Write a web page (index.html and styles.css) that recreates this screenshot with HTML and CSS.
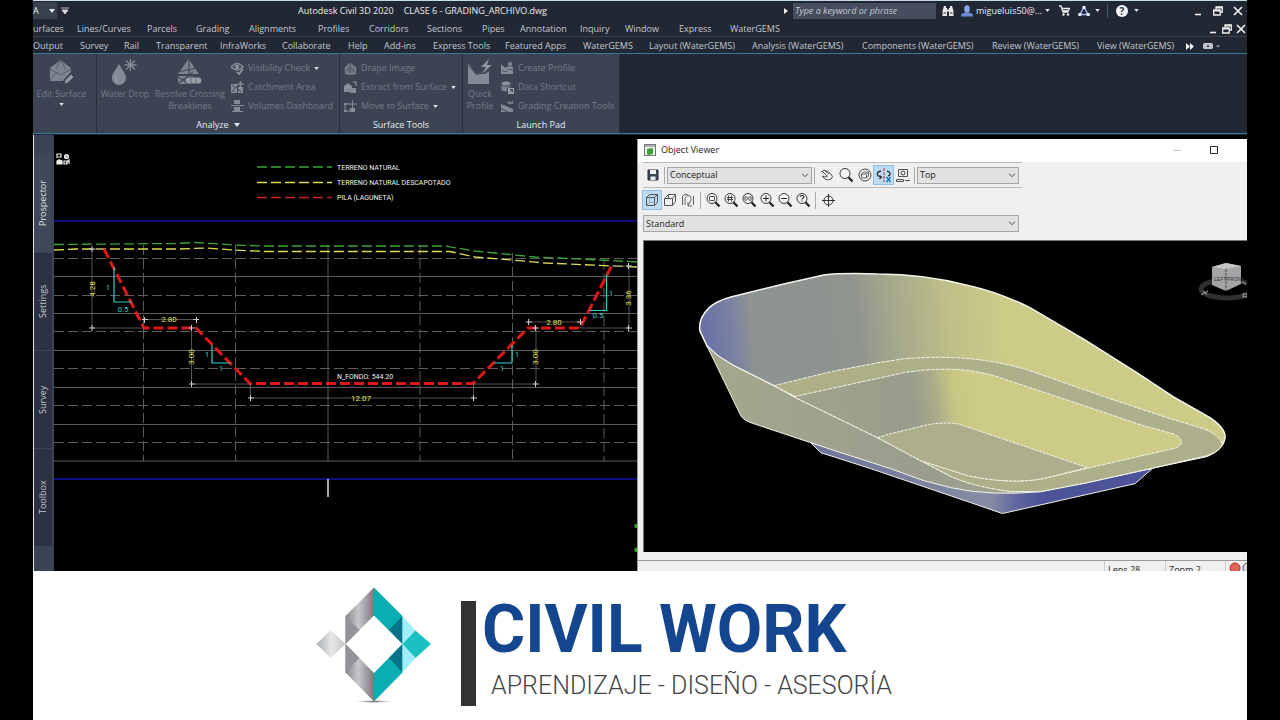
FILE: index.html
```html
<!DOCTYPE html>
<html lang="es">
<head>
<meta charset="utf-8">
<title>Autodesk Civil 3D 2020 - Civil Work</title>
<link rel="stylesheet" href="styles.css">
</head>
<body>
<svg class="defs" aria-hidden="true">
  <symbol id="caret" viewBox="0 0 6 4"><path d="M0 0h6L3 4z" fill="currentColor"/></symbol>
  <symbol id="restore" viewBox="0 0 10 10"><path d="M3 3V1h6.300v5H7.500M.7 4h6.500v5H.7zM.7 4.800h6.500M3 1.800h6" fill="none" stroke="currentColor" stroke-width="1.300"/></symbol>
  <symbol id="close" viewBox="0 0 10 10"><path d="M1 1l8 8M9 1L1 9" stroke="currentColor" stroke-width="1.700"/></symbol>
  <symbol id="min" viewBox="0 0 10 10"><path d="M2 8.500h6" stroke="currentColor" stroke-width="1.600"/></symbol>
  <symbol id="chev" viewBox="0 0 8 5"><path d="M1 .7l3 3 3-3" fill="none" stroke="#444"/></symbol>
  <symbol id="lens" viewBox="0 0 16 16"><circle cx="7" cy="6.500" r="5" fill="#f7f7f7" stroke="#333"/><path d="M10.500 10.200l4 4.300" stroke="#222" stroke-width="2.200"/></symbol>
</svg>
<div class="app">
  <header class="titlebar">
    <div class="quick"><button class="quick-a" aria-label="Workspace">A <svg class="car"><use href="#caret"/></svg></button>
      <button aria-label="Customize"><svg width="8" height="7"><path d="M0 1h8M1 3h6L4 7z" stroke="#ddd" fill="#ddd" stroke-width=".8"/></svg></button></div>
    <h1 class="doc"><span>Autodesk Civil 3D 2020</span><span>CLASE 6 - GRADING_ARCHIVO.dwg</span></h1>
    <div class="account">
      <svg class="play" width="5" height="8"><path d="M0 1l4 3-4 3z" fill="#eee"/></svg>
      <input class="search" type="text" aria-label="Search" placeholder="Type a keyword or phrase">
      <button aria-label="Find"><svg width="12" height="12"><path d="M2 1h2v2h1v8H.5V6zM8 1h2l1.500 5v5H7V3h1zM4.500 4.500h3v2h-3z" fill="#e8e8e8"/><path d="M1.500 8h2.500M8 8h2.500" stroke="#222833"/></svg></button>
      <button class="user"><svg width="12" height="12"><ellipse cx="6" cy="4" rx="2.800" ry="3.700" fill="#86a5e8"/><path d="M0 11.500c0-3 2-3.500 4-4h4c2 .5 4 1 4 4z" fill="#6a8cd8"/></svg><span>migueluis50@...</span><svg class="car sm"><use href="#caret"/></svg></button>
      <button class="cart" aria-label="Store"><svg width="11" height="11"><path d="M0 1h2l2 6h5.500M3 3.500h7.500L9 6H4" fill="none" stroke="#eee" stroke-width="1.300"/><circle cx="4.500" cy="9.500" r="1.200" fill="#eee"/><circle cx="9" cy="9.500" r="1.200" fill="#eee"/></svg></button>
      <button class="tri" aria-label="Apps"><svg width="12" height="12"><path d="M6 2L2 9.500h8z" fill="none" stroke="#9fb8f0" stroke-width="1.500"/><path d="M4.500 1h3v3h-3zM.3 8h3v3h-3zM8.700 8h3v3h-3z" fill="#e6ecff"/></svg><svg class="car sm"><use href="#caret"/></svg></button>
      <span class="rule"></span>
      <button class="help" aria-label="Help"><svg width="12" height="12"><circle cx="6" cy="6" r="6" fill="#f4f6fa"/><text x="6" y="9.500" text-anchor="middle" class="q">?</text></svg><svg class="car sm"><use href="#caret"/></svg></button>
      <span class="wins"><button aria-label="Minimize"><svg><use href="#min"/></svg></button><button aria-label="Restore"><svg><use href="#restore"/></svg></button><button aria-label="Close"><svg><use href="#close"/></svg></button></span>
    </div>
  </header>

  <nav class="menubar" aria-label="Menu">
    <button>urfaces</button><button>Lines/Curves</button><button>Parcels</button><button>Grading</button><button>Alignments</button><button>Profiles</button><button>Corridors</button><button>Sections</button><button>Pipes</button><button>Annotation</button><button>Inquiry</button><button>Window</button><button>Express</button><button>WaterGEMS</button>
    <span class="wins tight"><button aria-label="Minimize drawing"><svg><use href="#min"/></svg></button><button aria-label="Restore drawing"><svg><use href="#restore"/></svg></button><button aria-label="Close drawing"><svg><use href="#close"/></svg></button></span>
  </nav>

  <nav class="tabs" aria-label="Ribbon tabs">
    <button>Output</button><button>Survey</button><button>Rail</button><button>Transparent</button><button>InfraWorks</button><button>Collaborate</button><button>Help</button><button>Add-ins</button><button>Express Tools</button><button>Featured Apps</button><button>WaterGEMS</button><button>Layout (WaterGEMS)</button><button>Analysis (WaterGEMS)</button><button>Components (WaterGEMS)</button><button>Review (WaterGEMS)</button><button>View (WaterGEMS)</button>
    <button aria-label="More tabs"><svg width="8" height="7"><path d="M0 0l4 3.500L0 7zM4 0l4 3.500L4 7z" fill="#eee"/></svg></button>
    <button aria-label="Ribbon display"><svg width="18" height="7"><rect width="10" height="6" rx="1.500" fill="#c0c4cb"/><path d="M3.500 4L5 2l1.500 2z" fill="#222833"/><path d="M13 2.500h4l-2 2z" fill="#aaa"/></svg></button>
  </nav>

  <section class="ribbon">
    <div class="panel edit">
      <div class="tools"><button class="big"><svg width="26" height="26"><path d="M1 9L11.500 1 22 9v4l-5 5-3 4H1z" fill="#7d838f"/><path d="M1 10l10.500 6L22 10M1 21l7-8M11.500 1L7 10M11.500 1l5 9" stroke="#555d6c" fill="none"/><path d="M15 25l1-4 6-6 3 3-6 6z" fill="#9096a0" stroke="#3c4454"/></svg><span>Edit Surface</span><svg class="car sm"><use href="#caret"/></svg></button></div>
      <div class="ptitle"></div>
    </div>
    <div class="panel analyze">
      <div class="tools">
        <button class="big drop"><svg width="26" height="26"><path d="M7 5c3 6 7 9 7 14a7 7 0 0 1-14 0c0-5 4-8 7-14z" fill="#858b96"/><path d="M4 17c-1 4 1 6 3 7" stroke="#a3a8b1" fill="none"/><path d="M18.500 0v12M12.500 6h12M14 1.500l9 9M23 1.500l-9 9" stroke="#858b96" stroke-width="1.300"/></svg><span>Water Drop</span></button>
        <button class="big resolve"><svg width="26" height="26"><path d="M11.500 0L22 15H1zM1 17h15v8H1z" fill="#7d838f"/><path d="M12 0v15M0 13l20-4M1 18l10 6M1 25l15-12" stroke="#414958" stroke-width="1.200" fill="none"/><rect x="8" y="18" width="17" height="7" rx="3.500" fill="#9a9fa8" stroke="#3c4454"/><path d="M14 18v7M19 18v7" stroke="#6b717d"/></svg><span>Resolve Crossing<br>Breaklines</span></button>
        <div class="list">
          <button><svg width="13" height="13"><path d="M0 5q6-7 12 0-6 6-12 0z" fill="none" stroke="#858b96" stroke-width="1.500"/><circle cx="6" cy="5" r="2.400" fill="#858b96"/><path d="M6 10l2 2 4-5" fill="none" stroke="#9a9fa8" stroke-width="1.500"/></svg>Visibility Check<svg class="car sm"><use href="#caret"/></svg></button>
          <button><svg width="13" height="13"><path d="M0 3h6v9H0zM7 6h5v6H7z" fill="#858b96"/><path d="M1 11l4-5 5 5M1 4l4 3" stroke="#3c4454" fill="none"/><path d="M9.500 0v6M6.500 3h6" stroke="#858b96" stroke-width="1.500"/></svg>Catchment Area</button>
          <button><svg width="13" height="13"><path d="M3 0h6v4H3zM3 7h6v5H3z" fill="#858b96"/><path d="M0 5.500h13M1 11.500h11" stroke="#858b96"/></svg>Volumes Dashboard</button>
        </div>
      </div>
      <div class="ptitle">Analyze <svg class="car"><use href="#caret"/></svg></div>
    </div>
    <div class="panel surface">
      <div class="tools">
        <div class="list">
          <button><svg width="13" height="13"><path d="M1 6l5-5 6 5-1 6H2z" fill="#6f7682" stroke="#858b96"/><path d="M2 9l4-4 5 5M6 1v10" stroke="#4a5262" fill="none"/></svg>Drape Image</button>
          <button><svg width="13" height="13"><path d="M0 5l4-3 4 3v6H0zM6 7h6v5H6z" fill="#858b96"/><path d="M0 8l6-3M9 1h3v4" stroke="#9a9fa8" fill="none"/></svg>Extract from Surface<svg class="car sm"><use href="#caret"/></svg></button>
          <button><svg width="13" height="13"><path d="M1 4h5M1 4v7h6M8.500 0v8M5 4h8" fill="none" stroke="#858b96"/><path d="M6 8h5v4H6z" fill="#858b96"/><path d="M0 3h3v2H0zM0 10h3v2H0z" fill="#858b96"/></svg>Move to Surface<svg class="car sm"><use href="#caret"/></svg></button>
        </div>
      </div>
      <div class="ptitle">Surface Tools</div>
    </div>
    <div class="panel launch">
      <div class="tools">
        <button class="big qp"><svg width="26" height="26"><path d="M1 4v21h21V12l-4 3-5 0-4 1z" fill="#858b96"/><path d="M1 6l8 9 6-2 7-1" fill="none" stroke="#4a5262"/><path d="M22 0l-8 8h5l-4 7 10-9h-5z" fill="#9297a1"/></svg><span>Quick<br>Profile</span></button>
        <div class="list">
          <button><svg width="13" height="13"><path d="M0 2l4 4 4-2 4 1v7H0z" fill="#858b96"/><path d="M1 8l3 2 4-3 4 1" stroke="#4a5262" fill="none"/><circle cx="9" cy="2" r="2" fill="#858b96"/></svg>Create Profile</button>
          <button><svg width="13" height="13"><ellipse cx="5" cy="2.500" rx="4.500" ry="2" fill="#8d929d"/><path d="M.5 4.500q4.500 2 9 0v2H6v4q-4 0-5.500-1z" fill="#7b818d"/><path d="M7 7h6v6H7z" fill="#9ca1aa"/><path d="M8.500 11.500l3-3M9 8.500h2.500V11" stroke="#3c4454" fill="none"/></svg>Data Shortcut</button>
          <button><svg width="13" height="13"><path d="M0 4l12 5v3H8L0 8zM0 9l6 3H0z" fill="#858b96"/><path d="M6 1l4 1 2-2v4H7z" fill="#737a86"/></svg>Grading Creation Tools</button>
        </div>
      </div>
      <div class="ptitle">Launch Pad</div>
    </div>
  </section>

  <main class="work">
    <div class="side"><button class="on">Prospector</button><button>Settings</button><button>Survey</button><button>Toolbox</button></div>

    <svg class="drawing" viewBox="54 135 583 436" role="img" aria-label="Sección transversal">
      <g fill="none" stroke="#eee" stroke-width="1.200"><path d="M57 158v-4h4v3h-3M57 162l2-2"/><circle cx="66.500" cy="156.500" r="2" fill="#aaa"/><path d="M57 164v-3l2-1 3 1v3zM58 162h4" fill="#eee"/><path d="M64 161h3v3h-3zM66 163l3-3v4"/></g>
      <g stroke="#5d5d5d" fill="none">
        <path d="M54 276.500h583M54 313.500h583M54 350.500h583M54 387.500h583M54 424.500h583M54 461h583M328 245v216"/>
        <path stroke-dasharray="10 4" d="M54 258.500h583M54 295.500h583M54 331.500h583M54 368.500h583M54 405.500h583M54 442.500h583M143.500 245v216M235.500 245v216M420 245v216M512.500 253v208M604 260v201"/>
      </g>
      <path d="M54 221h583M54 479h583" stroke="#1414a8" stroke-width="1.500"/>
      <path d="M328 479v18" stroke="#ddd" stroke-width="1.500"/>
      <g fill="none" stroke-dasharray="10 4">
        <path stroke="#3ba536" stroke-width="1.300" d="M257 167h75M54 244.500L175 243.500 195 242.500 235 245 265 246H445L475 251 535 257 600 260 637 262"/>
        <path stroke="#dcdc50" stroke-width="1.300" d="M257 182.500h75M54 250L75 249H180L205 248 235 250 265 251.500H450L475 257 512 260 545 263 637 267"/>
        <path stroke="#d02020" stroke-width="1.500" d="M257 197.500h75"/>
        <path stroke="#de1818" stroke-width="3" d="M104 249L144 328H196L250 383.500H473L528 328H580L612 265"/>
      </g>
      <path stroke="#777" stroke-width=".7" fill="none" d="M92 249v79h52M92 249h12M144 319.500h52M191.500 328v56h59M250.500 384v14h223v-14M528 322h52M536 328v56h-63M580 328h49v-62h-17"/>
      <path stroke="#ccc" fill="none" d="M89 249h6M92 246v6M89 328h6M92 325v6M142 319.500h6M144.500 317v6M193 319.500h6M196.500 317v6M189 328h6M191.500 325v6M189 384h6M191.500 381v6M248 398h6M250.500 395v6M471 398h6M473.500 395v6M526 322h6M528.500 319v6M577 322h6M580.500 319v6M533 328h6M535.500 325v6M533 384h6M535.500 381v6M626 266h6M628.500 263v6M626 328h6M628.500 325v6"/>
      <path stroke="#35cccc" stroke-width="1.200" fill="none" d="M114 267v35h18M212 345v18h18M512 345v18h-18M606.500 275v35.500h-17"/>
      <g class="cad">
        <g class="note"><text x="337" y="170">TERRENO NATURAL</text><text x="337" y="185">TERRENO NATURAL DESCAPOTADO</text><text x="337" y="200">PILA (LAGUNETA)</text><text x="337" y="379">N_FONDO: 544.20</text></g>
        <g class="dim"><text x="169" y="322">2.80</text><text x="361" y="401">12.07</text><text x="554" y="325">2.80</text><text transform="translate(95 289) rotate(-90)">4.28</text><text transform="translate(194 357) rotate(-90)">3.00</text><text transform="translate(538 357) rotate(-90)">3.00</text><text transform="translate(631 298) rotate(-90)">3.36</text></g>
        <g fill="#35cccc"><text x="108" y="290">1</text><text x="123" y="312">0.5</text><text x="207" y="357">1</text><text x="221" y="371">1</text><text x="517" y="357">1</text><text x="502" y="371">1</text><text x="611" y="296">1</text><text x="598" y="318">0.5</text></g>
      </g>
      <path d="M637 523.500l-3 1.500 1 3h2zM637 547l-3 2 1 3h2z" fill="#2f9e2c"/>
    </svg>

    <section class="viewer">
      <div class="vhead"><svg width="12" height="13"><rect x=".5" y=".5" width="11" height="11" fill="#eee" stroke="#777"/><path d="M0 2h12" stroke="#777"/><path d="M3 5l5-1 1 1v5l-5 1-1-1z" fill="#3da23a"/></svg><h2>Object Viewer</h2><span class="vwins"><button aria-label="Minimize viewer"><svg width="10" height="10"><path d="M1 5.500h8" stroke="#ccc"/></svg></button><button aria-label="Maximize viewer"><svg width="10" height="10"><path d="M1.500 1.500h7v7h-7z" fill="none" stroke="#222"/></svg></button></span></div>
      <div class="vrow">
        <button aria-label="Save"><svg width="14" height="14"><path d="M2 2h10v10H2z" fill="#3b4758" stroke="#222b36"/><path d="M4 2h6v4H4zM4.500 8.500h5V12h-5z" fill="#eee"/></svg></button>
        <i class="sep"></i>
        <label class="pick style"><select aria-label="Visual style"><option>Conceptual</option></select><svg><use href="#chev"/></svg></label>
        <i class="sep"></i>
        <button aria-label="Pan"><svg width="16" height="16"><path d="M2 5q3-3 6-1l4 3q3 3 0 5-3 2-6 0L3 9q4 2 6 0M3 4l5 5M5 3l5 4" fill="none" stroke="#555"/></svg></button>
        <button aria-label="Zoom"><svg width="16" height="16"><use href="#lens"/></svg></button>
        <button aria-label="Orbit"><svg width="16" height="16"><circle cx="8" cy="8" r="6" fill="none" stroke="#444"/><path d="M4.500 7l2-2h5v4l-2 2h-5zM4.500 7h5v4M9.500 7l2-2" fill="none" stroke="#666"/></svg></button>
        <button class="hot" aria-label="Constrained orbit"><svg width="16" height="16"><path d="M5 4C0 5 0 9 5 10M11 4c4 1 4 4 1 5M3.500 8.500L5.500 10l-2 2" fill="none" stroke="#333" stroke-width="1.300"/><path d="M8 1v14" stroke="#c22" stroke-dasharray="3 1"/><path d="M10.500 10l4 5M14.500 10l-4 5" stroke="#1769c8" stroke-width="1.300"/></svg></button>
        <button aria-label="Camera"><svg width="16" height="16"><path d="M3.500 2.500h9v7h-9zM1.500 12.500h7v2h-7zM10 13.500h5" fill="none" stroke="#555"/><circle cx="8" cy="6" r="2" fill="none" stroke="#444"/></svg></button>
        <i class="sep"></i>
        <label class="pick view"><select aria-label="View"><option>Top</option></select><svg><use href="#chev"/></svg></label>
      </div>
      <div class="vrow second">
        <button class="hot" aria-label="Parallel"><svg width="16" height="16"><path d="M2.500 5.500l3-3h8v8l-3 3h-8zM2.500 5.500h8v8M10.500 5.500l3-3" fill="none" stroke="#555"/><path d="M5.500 2.500v8h8M5.500 10.500l-3 3" fill="none" stroke="#9ab"/></svg></button>
        <button aria-label="Perspective"><svg width="16" height="16"><path d="M2.500 6.500l4-4h7v7l-3 4h-8zM2.500 6.500h8v7M10.500 6.500l3-4M6.500 2.500v4" fill="none" stroke="#555"/></svg></button>
        <button aria-label="Reset"><svg width="16" height="16"><path d="M2.500 13V4l3-2M5 13V8c0-6 7-6 6 0l-3 6M13.500 4v9M8 10v4h4M5 2l3 1" fill="none" stroke="#666"/></svg></button>
        <i class="sep"></i>
        <button aria-label="Zoom window"><svg width="16" height="16"><use href="#lens"/><path d="M4.500 4.500h5v4h-5z" fill="none" stroke="#555"/></svg></button>
        <button aria-label="Zoom center"><svg width="16" height="16"><use href="#lens"/><path d="M5.500 3.500v6M8.500 3.500v6M4 5.500h6M4 7.500h6" stroke="#444"/></svg></button>
        <button aria-label="Zoom extents"><svg width="16" height="16"><use href="#lens"/><path d="M4.500 4l5 5M9.500 4l-5 5M4 4.500v4M10 4.500v4" stroke="#444"/></svg></button>
        <button aria-label="Zoom in"><svg width="16" height="16"><use href="#lens"/><path d="M4 6.500h6M7 3.500v6" stroke="#222"/></svg></button>
        <button aria-label="Zoom out"><svg width="16" height="16"><use href="#lens"/><path d="M4 6.500h6" stroke="#222"/></svg></button>
        <button aria-label="Zoom previous"><svg width="16" height="16"><use href="#lens"/><path d="M5 5c0-2 4-2 4 0 0 1-2 1-2 2.500M7 8.500v1" fill="none" stroke="#222" stroke-width="1.200"/></svg></button>
        <i class="sep"></i>
        <button aria-label="Target"><svg width="16" height="16"><circle cx="8.500" cy="8.500" r="4.500" fill="none" stroke="#333"/><path d="M8.500 2v13M2 8.500h13" stroke="#333"/></svg></button>
      </div>
      <label class="pick std"><select aria-label="Model"><option>Standard</option></select><svg><use href="#chev"/></svg></label>
      <svg class="model" viewBox="643 240 604 312" role="img" aria-label="Modelo 3D">
        <defs>
          <linearGradient id="wall" gradientUnits="userSpaceOnUse" x1="699" y1="330" x2="1000" y2="300"><stop offset="0" stop-color="#666fa8"/><stop offset=".12" stop-color="#7d84a0"/><stop offset=".17" stop-color="#8d9391"/><stop offset=".52" stop-color="#90948f"/><stop offset=".62" stop-color="#a2a58c"/><stop offset=".83" stop-color="#bfbf88"/><stop offset="1" stop-color="#cccb87"/></linearGradient>
          <linearGradient id="inner" gradientUnits="userSpaceOnUse" x1="793" y1="410" x2="975" y2="385"><stop offset="0" stop-color="#a1a48a"/><stop offset=".65" stop-color="#999c8c"/><stop offset=".76" stop-color="#a8aa89"/><stop offset=".88" stop-color="#c7c683"/><stop offset="1" stop-color="#cccb87"/></linearGradient>
          <linearGradient id="near" x1="0" x2="1"><stop offset="0" stop-color="#a5a78d"/><stop offset=".65" stop-color="#9a9d8e"/><stop offset="1" stop-color="#a4a68c"/></linearGradient>
          <linearGradient id="base" gradientUnits="userSpaceOnUse" x1="810" y1="0" x2="1060" y2="0"><stop offset="0" stop-color="#6d7498"/><stop offset=".72" stop-color="#868ca4"/><stop offset=".82" stop-color="#6168a0"/><stop offset=".92" stop-color="#4c5398"/></linearGradient>
          <linearGradient id="bench" x1="0" x2="1"><stop offset="0" stop-color="#adaf86"/><stop offset="1" stop-color="#aeb08c"/></linearGradient>
        </defs>
        <rect x="643" y="240" width="604" height="312" fill="#000"/>
        <g stroke="#f4f4ea" stroke-width="1" stroke-linejoin="round">
          <path fill="url(#base)" d="M810 442L820 452 870 468 970 502 1002 513 1135 483 1152 468 1040 485z"/>
          <path fill="#59609a" d="M1225 437Q1224 449 1207 456L1150 468 1200 452z"/>
          <path fill="url(#wall)" stroke-width="1.500" d="M699 330Q697 318 708 307 715 300 730 296L783 283 823 274Q840 272 877 273 925 273 970 285 1000 292 1030 307L1083 338 1137 372 1173 396 1210 417Q1226 428 1225 437 1223 449 1207 455L1150 468 1087 482 1040 491H1010L960 481 877 437 793 396 773 385 733 365 717 355 706 345Z"/>
          <path fill="url(#near)" d="M706 345L717 355 733 365 773 385 793 396 877 437 943 472Q960 482 1010 491L1040 491 Q990 496 950 487L923 480 890 468 837 451 753 423Q743 420 740 415z"/>
          <path fill="url(#bench)" stroke-dasharray="4 1" d="M773 385L830 371 877 362 903 358Q940 355 970 358 1000 361 1027 369L1107 397 1167 417 1203 428Q1218 433 1222 443 1221 450 1207 455L1150 468 1087 482 1040 491H1010Q965 485 943 472L877 437z"/>
          <path fill="url(#inner)" stroke-dasharray="4 1" d="M793 396L857 382 903 372Q940 366 970 370 990 373 1003 378L1093 408 1143 425 1173 433Q1187 440 1177 447L1090 467 1043 478Q1010 484 967 475L920 460 877 437z"/>
          <path fill="#adae8b" stroke-dasharray="3 1" d="M877 437L890 433 923 425Q940 421 957 423L993 435 1087 467 1043 478Q1010 484 967 475L920 460z"/>
        </g>
        <ellipse cx="1227" cy="288" rx="26" ry="9" fill="none" stroke="#303030" stroke-width="5"/>
        <path d="M1212 266l14-4 15 3v18l-15 7-14-6z" fill="#a2a4a6"/><path d="M1212 266l14-4 15 3-15 3z" fill="#c4c6c8"/><path d="M1226 268v22" stroke="#444" stroke-dasharray="3 1"/>
        <g class="cube"><text x="1214" y="280">LEFT</text><text x="1227" y="280">FRONT</text></g><path d="M1201 294l7-4M1203 290l4 4M1242 281l4 2M1243 293h4v3h-4z" stroke="#aaa" fill="none"/>
      </svg>
      <div class="status"><span class="cell lens">Lens 28</span><span class="cell zoom">Zoom 2</span><span class="cell"><svg width="18" height="14"><circle cx="6" cy="7" r="5" fill="#e0645a" stroke="#a33"/><circle cx="19" cy="7" r="5" fill="#ddd" stroke="#555"/></svg></span></div>
    </section>
  </main>

  <footer class="brand">
    <svg class="logo" viewBox="316 586 116 118" role="img" aria-label="Civil Work">
      <defs><linearGradient id="g1"><stop offset="0" stop-color="#85878a"/><stop offset=".45" stop-color="#c6c8ca"/><stop offset="1" stop-color="#77797c"/></linearGradient><linearGradient id="g2"><stop offset="0" stop-color="#a9acb0"/><stop offset=".5" stop-color="#e4e6e8"/><stop offset="1" stop-color="#c4c6c8"/></linearGradient><radialGradient id="sh"><stop offset="0" stop-color="#777"/><stop offset="1" stop-color="#fff"/></radialGradient></defs>
      <ellipse cx="374" cy="701.500" rx="18" ry="1.500" fill="url(#sh)"/>
      <path d="M374 587.500L345.500 616V644L374 615.500zM374 701.500L345.500 672.500V644L374 673z" fill="url(#g1)"/>
      <path d="M345.500 616L359.500 630 345.500 644zM345.500 644L359.500 658 345.500 672.500z" fill="#929497"/>
      <path d="M316.500 644L330.500 630 345.500 644 330.500 658z" fill="url(#g2)"/>
      <path d="M374 587.500L402.500 616V644L374 615.500zM374 701.500L402.500 672.500V644L374 673z" fill="#08aeb1"/>
      <path d="M402.500 616V644L389 630zM402.500 644V672.500L389 658z" fill="#087287"/>
      <path d="M402.500 616L415.500 630.500 402.500 644zM402.500 644L415.500 658 402.500 672.500z" fill="#9eeefb"/>
      <path d="M402.500 644L415.500 630.500 431 644 415.500 658z" fill="#1bc1c0"/>
    </svg>
    <div class="words"><strong>CIVIL WORK</strong><span>APRENDIZAJE - DISEÑO - ASESORÍA</span></div>
  </footer>
</div>
</body>
</html>
```
FILE: styles.css
```css
* { box-sizing: border-box; }
body { margin: 0; background: #000; font: 9px/12px "Open Sans", "Noto Sans", sans-serif; }
button { display: flex; align-items: center; padding: 0; border: 0; background: none; color: inherit; font: inherit; white-space: nowrap; text-align: left; }
svg { flex: none; display: block; }
h1, h2 { margin: 0; font: inherit; }
.defs { position: absolute; width: 0; height: 0; }
.app { display: flex; flex-direction: column; min-height: 100vh; margin: 0 33px; background: #222833; color: #c3c7ce; }
.car { width: 6px; height: 4px; color: #e4e6ea; }
.car.sm { width: 5px; height: 3px; }

.titlebar { display: grid; grid-template-columns: 265fr 486fr 463fr; align-items: center; height: 20px; border-top: 1px solid #c5dde5; color: #e9ebee; }
.quick { display: flex; gap: 4px; height: 100%; align-items: center; }
.quick-a { gap: 10px; width: 24px; height: 17px; background: #39414f; }
.doc { display: flex; gap: 10px; white-space: nowrap; }
.account { display: flex; align-items: center; min-width: 0; }
.play { margin-right: 4px; }
.search { width: 143px; height: 16px; margin-right: 6px; padding: 0 2px; border: 0; background: #454d5e; color: #ddd; font: italic 9px/14px "Open Sans", sans-serif; }
.search::placeholder { color: #c5c9d0; opacity: 1; }
.user { gap: 3px; width: 89px; margin-left: 7px; }
.cart { margin-left: 9px; }
.tri { gap: 5px; margin-left: 8px; }
.rule { width: 1px; height: 14px; margin: 0 8px 0 7px; background: #505866; }
.help { gap: 6px; }
.q { font: bold 10px "Open Sans", sans-serif; fill: #234; }
.wins { display: flex; gap: 10px; margin-left: auto; padding-right: 4px; color: #eee; }
.wins svg { width: 10px; height: 10px; }

.menubar { display: grid; grid-template-columns: 44fr 70fr 49fr 53fr 69fr 51fr 58fr 55fr 38fr 60fr 45fr 54fr 51fr 50fr 467fr; align-items: center; height: 17px; padding-top: 2px; border-bottom: 1px solid #39404c; }
.menubar > *, .tabs > * { min-width: 0; }
.wins.tight { gap: 4px; padding-right: 1px; }
.tabs { display: grid; grid-template-columns: 47fr 44fr 32fr 64fr 62fr 66fr 36fr 49fr 72fr 78fr 66fr 103fr 110fr 130fr 105fr 89fr 17fr 44fr; align-items: center; height: 17px; padding-top: 2px; border-bottom: 1px solid #35799a; }

.ribbon { display: flex; height: 80px; border-bottom: 1px solid #35799a; color: #747b88; }
.panel { display: flex; flex-direction: column; background: #3c4454; border-right: 1px solid #272d39; }
.edit { width: 64px; }
.analyze { width: 243px; }
.surface { width: 123px; }
.launch { width: 157px; }
.tools { display: flex; flex: 1; padding-top: 5px; }
.ptitle { display: flex; gap: 5px; align-items: center; justify-content: center; height: 16px; color: #e8eaed; }
.big { flex-direction: column; height: 52px; text-align: center; gap: 3px; }
.edit .big { width: 57px; }
.drop { width: 56px; }
.resolve { width: 74px; }
.qp { width: 34px; }
.list { display: flex; flex-direction: column; gap: 1px; padding-left: 4px; }
.list button { gap: 4px; height: 18px; }

.work { display: grid; grid-template-columns: 21px 583fr 610fr; border-top: 1px solid #222833; background: #000; }
.side { display: flex; flex-direction: column; gap: 1px; padding: 20px 2px 0 0; border-left: 1px solid #e6e8ea; background: #3b4454; }
.side button { justify-content: center; height: 97px; writing-mode: vertical-rl; transform: rotate(180deg); background: #2c3241; }
.side .on { background: #3f4859; color: #dfe2e6; }
.drawing { width: 100%; height: auto; }
.cad { font: 8px Roboto, "Liberation Sans", sans-serif; text-anchor: middle; }
.note { fill: #f2f2f2; font-size: 7px; text-anchor: start; }
.dim { fill: #e4e45a; }

.viewer { min-width: 0; margin-top: 4px; padding-left: 5px; border-left: 1px solid #999; background: #f0f0f0; color: #222; }
.vhead { display: flex; align-items: center; gap: 5px; height: 23px; margin-left: -5px; padding: 0 0 1px 6px; background: #fff; }
.vwins { display: flex; gap: 27px; margin-left: auto; padding-right: 28px; }
.vrow { display: flex; align-items: center; width: 379px; height: 25px; border-top: 1px solid #bbb; }
.vrow button { justify-content: center; width: 19px; height: 18px; }
.vrow.second button { width: 18px; }
.vrow .hot { background: #bcdcf4; outline: 1px solid #90c0e8; }
.sep { width: 1px; height: 17px; margin: 0 2px; background: #aaa; }
.second .sep { margin: 0 3px; }
.pick { position: relative; display: flex; }
.pick select { width: 100%; height: 17px; padding: 0 2px; appearance: none; border: 1px solid #a6a6a6; border-radius: 0; background: #e2e2e2; color: #222; font: inherit; }
.pick svg { position: absolute; right: 3px; top: 6px; width: 8px; height: 5px; }
.style { width: 145px; }
.view { width: 102px; }
.std { width: 376px; margin: 3px 0 8px; }
.model { width: 100%; height: auto; border-top: 1px solid #777; border-left: 1px solid #777; }
.cube { font: 5px "Liberation Sans", sans-serif; fill: #333; }
.status { display: flex; justify-content: flex-end; height: 19px; margin-left: -5px; padding-top: 9px; overflow: hidden; line-height: 18px; background: linear-gradient(#f0f0f0 8px, #999 8px 9px, #f0f0f0 9px); }
.cell { padding-left: 3px; border-left: 1px solid #ccc; }
.lens { width: 61px; }
.zoom { width: 60px; }

.brand { display: flex; flex: 1; justify-content: center; align-items: center; padding: 0 72px 2px 0; background: #fff; }
.logo { width: 116px; height: 118px; margin-right: 29px; }
.words { display: flex; flex-direction: column; height: 105px; margin-top: 17px; padding-left: 6px; border-left: 15px solid #333; font-family: Roboto, sans-serif; white-space: nowrap; }
.words strong { color: #14468f; font-size: 66px; line-height: 57px; }
.words span { padding-left: 9px; color: #444; font-size: 25px; font-weight: 300; line-height: 56px; }
```
